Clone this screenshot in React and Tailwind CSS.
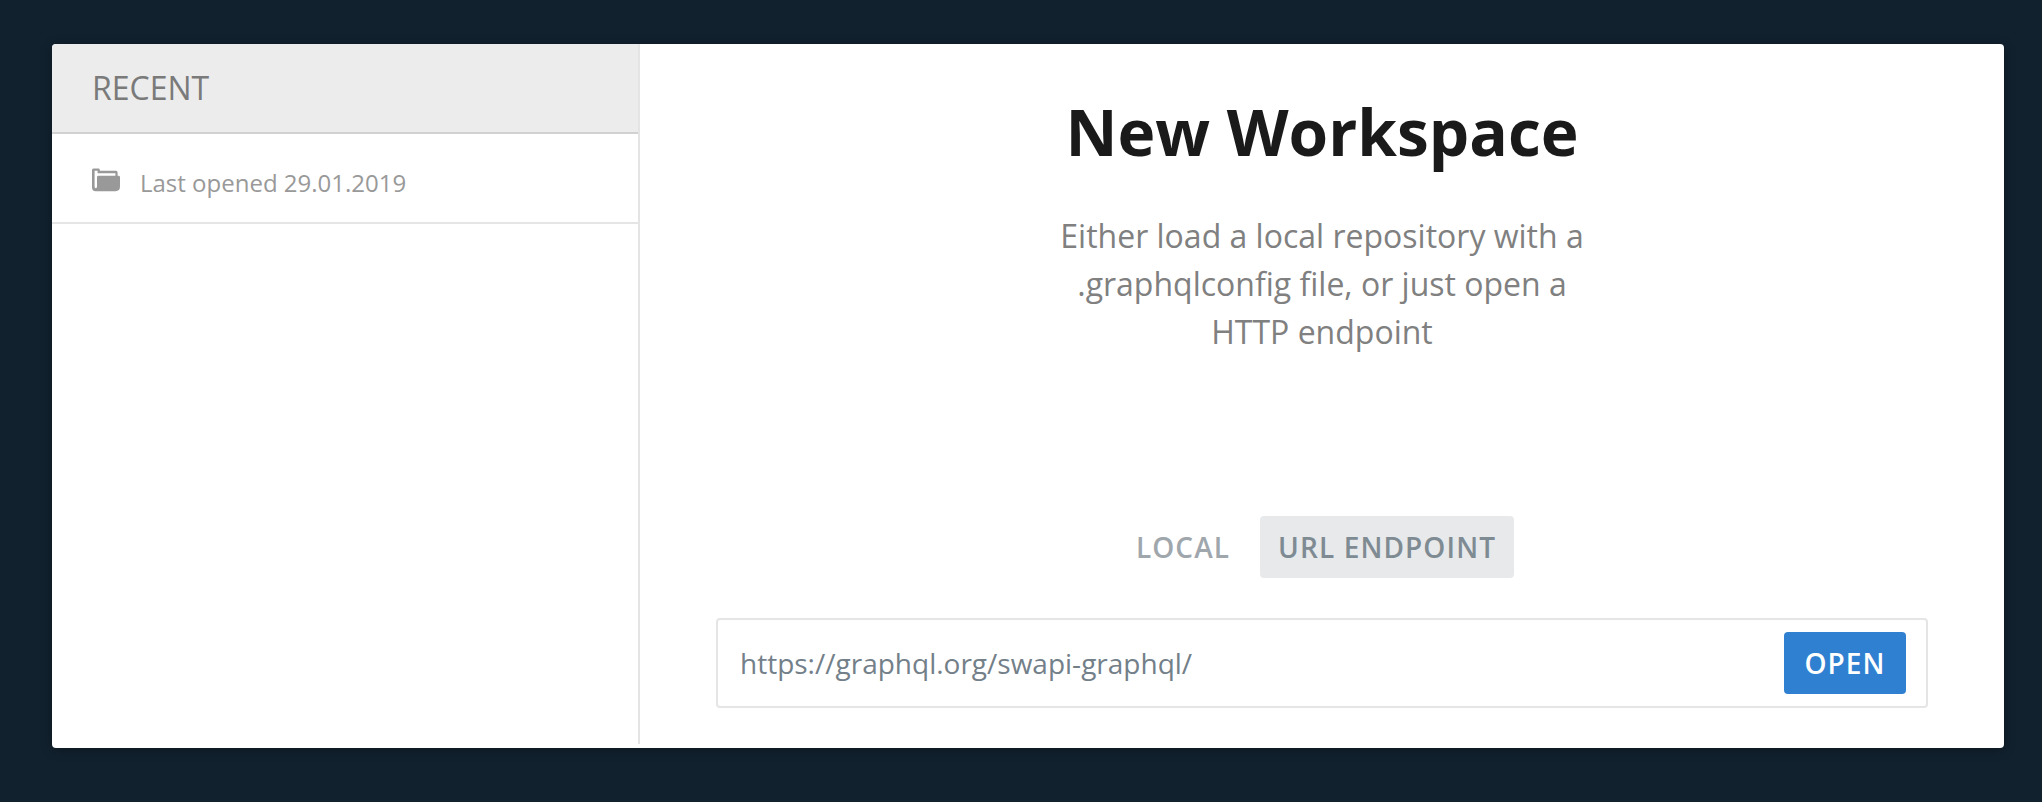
function FolderIcon() {
  return (
    <svg className="block h-6 w-7 shrink-0" viewBox="0 0 28 24" fill="#999999">
      <path
        fillRule="evenodd"
        d="M1.5 0.5H6.4Q7.8 0.5 7.8 1.9V2.8H24Q25.6 2.8 25.6 4.4V7.8H26.6Q28 7.8 28 9.2V18.6Q28 23.2 23.4 23.2H3.6Q0 23.2 0 19.6V2Q0 0.5 1.5 0.5ZM2.6 2.7V18.4Q2.6 20.2 3.8 20.2Q5 20.2 5 18.4V9.2Q5 7.8 6.4 7.8H23.4V5.2H5.6V2.7Z"
      />
    </svg>
  );
}

function Sidebar() {
  return (
    <aside className="h-[700px] w-[588px] shrink-0 border-r-2 border-[#e4e4e4]">
      <div className="flex h-[90px] items-center border-b-2 border-[#d1d1d1] bg-[#ececec] pl-10 text-[32px] text-[#7a7a7a]">
        RECENT
      </div>
      <div className="flex h-[90px] items-center gap-5 border-b-2 border-[#e5e5e5] pl-10 pt-2.5 text-[24px] text-[#999999]">
        <div className="-mt-1.5">
          <FolderIcon />
        </div>
        <span>Last opened 29.01.2019</span>
      </div>
    </aside>
  );
}

export default function App() {
  return (
    <div className="h-[802px] bg-[#11212e] px-[52px] pt-[44px] pr-[38px] font-['Open_Sans',sans-serif]">
      <div className="flex h-[704px] overflow-hidden rounded bg-white shadow-[0_2px_12px_rgba(0,0,0,0.3)]">
        <Sidebar />
        <main className="flex flex-1 flex-col items-center px-[76px]">
          <h1 className="mt-[44px] text-[64px] leading-[87px] font-bold text-[#1a1a1a]">New Workspace</h1>
          <p className="mt-[37px] w-[540px] text-center text-[32px] leading-[48px] text-[#808080]">
            Either load a local repository with a .graphqlconfig file, or just open a HTTP endpoint
          </p>
          <div className="mt-[160px] flex text-[28px] leading-[62px] font-semibold tracking-[1.1px]">
            <button className="mr-3 h-[62px] px-[18px] text-[#9fa7ad]">LOCAL</button>
            <button className="mr-3 h-[62px] w-[254px] rounded bg-[#e7e9eb] text-[#7f8b93]">URL ENDPOINT</button>
          </div>
          <div className="mt-10 flex h-[90px] w-full items-center justify-between rounded border-2 border-[#e5e5e5] pr-5 pl-[22px]">
            <span className="text-[28px] text-[#738089]">https://graphql.org/swapi-graphql/</span>
            <button className="h-[62px] w-[122px] rounded bg-[#2f80d0] text-[28px] font-semibold tracking-[1.1px] text-white">
              OPEN
            </button>
          </div>
        </main>
      </div>
    </div>
  );
}
